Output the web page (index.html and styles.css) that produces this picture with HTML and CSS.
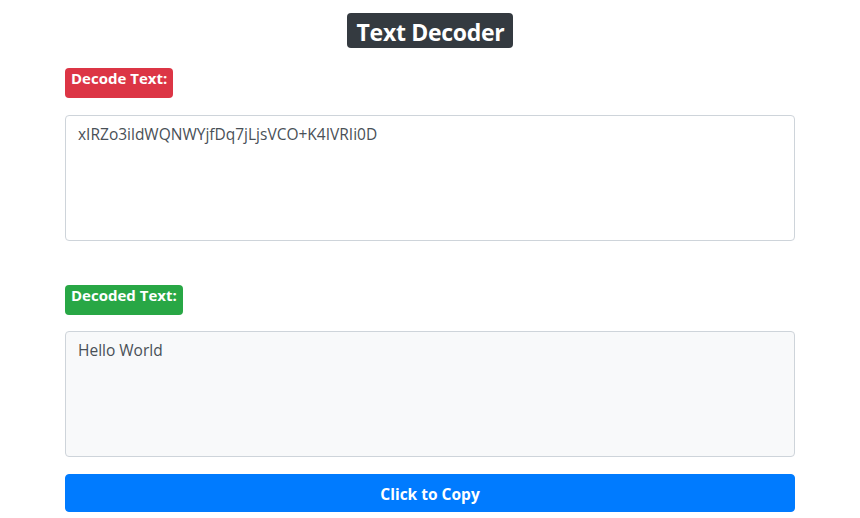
FILE: index.html
```html
<!DOCTYPE html>
<html lang="en">
<head>
<meta charset="utf-8">
<title>Text Decoder</title>
<link rel="stylesheet" href="styles.css">
</head>
<body>
<div class="page">
  <header class="title-row">
    <h2 class="title">Text Decoder</h2>
  </header>
  <section class="field">
    <div class="label-row"><span class="tag tag-danger">Decode Text:</span></div>
    <textarea class="box" rows="4">xIRZo3ildWQNWYjfDq7jLjsVCO+K4IVRIi0D</textarea>
  </section>
  <section class="field field-out">
    <div class="label-row"><span class="tag tag-success">Decoded Text:</span></div>
    <textarea class="box box-light" rows="4" readonly>Hello World</textarea>
  </section>
  <button class="copy-btn" type="button">Click to Copy</button>
</div>
</body>
</html>
```

FILE: styles.css
```css
* { box-sizing: border-box; }
html, body {
  margin: 0;
  padding: 0;
  background: #fff;
}
body {
  font-family: "Open Sans", "Noto Sans", "Liberation Sans", sans-serif;
  color: #212529;
}
.page {
  display: flex;
  flex-direction: column;
  padding: 13px 65px 0 65px;
}
.title-row {
  display: flex;
  justify-content: center;
}
.title {
  margin: 0;
  background: #343a40;
  color: #fff;
  font-size: 23px;
  font-weight: 700;
  line-height: 24px;
  height: 35px;
  padding: 7px 9px 4px 10px;
  border-radius: 4px;
  letter-spacing: -0.3px;
}
.field {
  display: flex;
  flex-direction: column;
  margin-top: 20px;
}
.field-out {
  margin-top: 44px;
}
.label-row {
  display: flex;
}
.tag {
  display: inline-block;
  color: #fff;
  font-size: 15px;
  font-weight: 700;
  line-height: 14px;
  height: 30px;
  padding: 3px 6px 13px 6px;
  border-radius: 4px;
}
.tag-danger { background: #dc3545; }
.tag-success { background: #28a745; }
.box {
  display: block;
  width: 100%;
  height: 126px;
  margin-top: 17px;
  padding: 6px 12px;
  font-family: inherit;
  font-size: 15.5px;
  line-height: 24px;
  color: #495057;
  background: #fff;
  border: 1px solid #ced4da;
  border-radius: 4px;
  resize: none;
  outline: none;
}
.box-light {
  margin-top: 16px;
  background: #f8f9fa;
}
.copy-btn {
  margin-top: 17px;
  height: 38px;
  width: 100%;
  background: #007bff;
  color: #fff;
  border: 1px solid #007bff;
  border-radius: 4px;
  font-family: inherit;
  font-size: 15.5px;
  font-weight: 700;
  line-height: 24px;
  padding: 7px 12px 5px 12px;
}
```
